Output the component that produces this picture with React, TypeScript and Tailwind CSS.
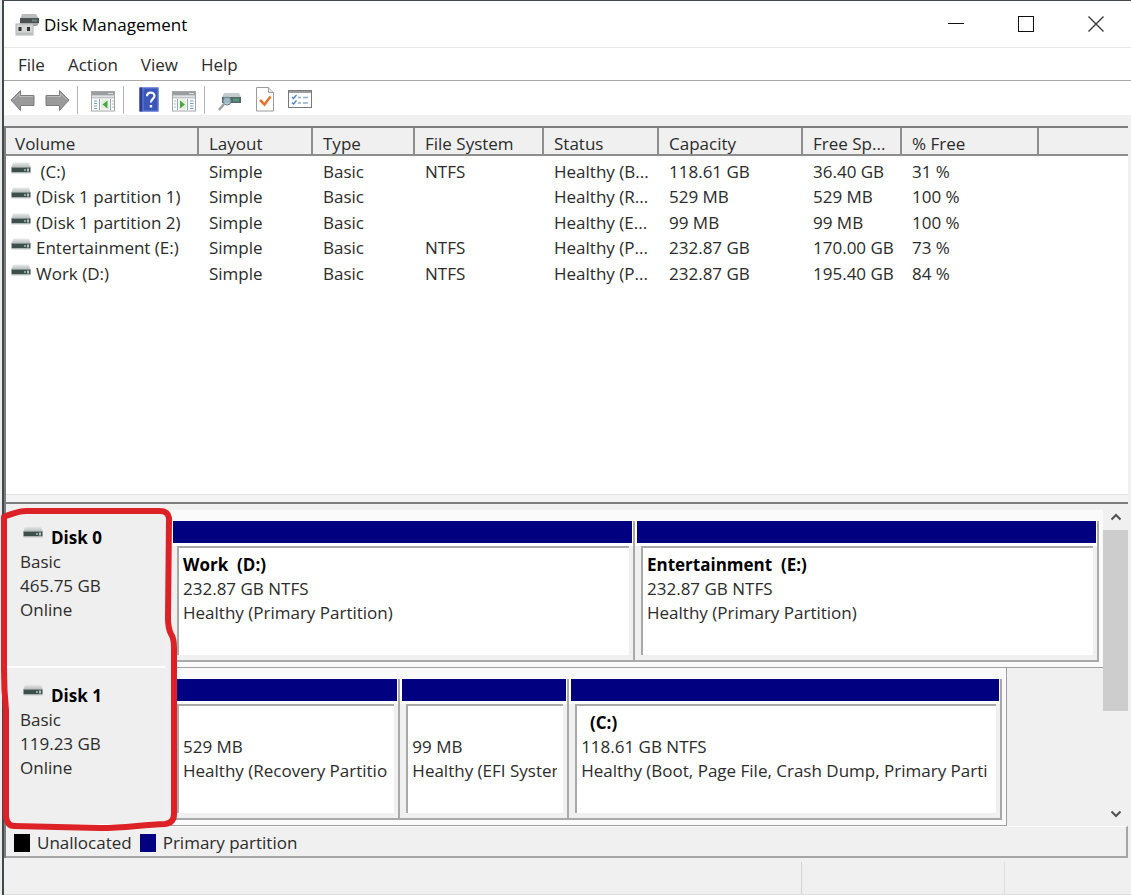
import type { ReactNode } from "react";

const columns = [
  { label: "Volume", width: "w-[193px]" },
  { label: "Layout", width: "w-[114px]" },
  { label: "Type", width: "w-[102px]" },
  { label: "File System", width: "w-[129px]" },
  { label: "Status", width: "w-[115px]" },
  { label: "Capacity", width: "w-[144px]" },
  { label: "Free Sp...", width: "w-[99px]" },
  { label: "% Free", width: "w-[137px]" },
];

const volumes = [
  [" (C:)", "Simple", "Basic", "NTFS", "Healthy (B...", "118.61 GB", "36.40 GB", "31 %"],
  ["(Disk 1 partition 1)", "Simple", "Basic", "", "Healthy (R...", "529 MB", "529 MB", "100 %"],
  ["(Disk 1 partition 2)", "Simple", "Basic", "", "Healthy (E...", "99 MB", "99 MB", "100 %"],
  ["Entertainment (E:)", "Simple", "Basic", "NTFS", "Healthy (P...", "232.87 GB", "170.00 GB", "73 %"],
  ["Work (D:)", "Simple", "Basic", "NTFS", "Healthy (P...", "232.87 GB", "195.40 GB", "84 %"],
];

const disks = [
  {
    name: "Disk 0",
    size: "465.75 GB",
    frame: "mr-0 pr-1",
    partitions: [
      { name: "Work  (D:)", size: "232.87 GB NTFS", status: "Healthy (Primary Partition)", grow: "flex-1" },
      { name: "Entertainment  (E:)", size: "232.87 GB NTFS", status: "Healthy (Primary Partition)", grow: "flex-1" },
    ],
  },
  {
    name: "Disk 1",
    size: "119.23 GB",
    frame: "mr-24 pr-1 border-r border-r-[#a0a0a0]",
    partitions: [
      { name: "", size: "529 MB", status: "Healthy (Recovery Partitio", grow: "flex-[229]" },
      { name: "", size: "99 MB", status: "Healthy (EFI System", grow: "flex-[168]" },
      { name: "  (C:)", size: "118.61 GB NTFS", status: "Healthy (Boot, Page File, Crash Dump, Primary Parti", grow: "flex-[434]" },
    ],
  },
];

function DriveIcon() {
  return (
    <svg width="20" height="13" viewBox="0 0 20 13" className="shrink-0" aria-hidden="true">
      <defs>
        <linearGradient id="driveTop" x1="0" y1="0" x2="0" y2="1">
          <stop offset="0" stopColor="#e9eceb" />
          <stop offset="1" stopColor="#b4bbb9" />
        </linearGradient>
      </defs>
      <path d="M2 0.5h16l1.500 5H0.500z" fill="url(#driveTop)" />
      <rect x="0.5" y="5.5" width="19" height="5" fill="#3c4f4a" />
      <rect x="0.5" y="5" width="19" height="1" fill="#84918d" />
      <rect x="13" y="7" width="2" height="2" fill="#8fa39c" />
      <rect x="16" y="6.5" width="2" height="3" fill="#b5c4bf" />
      <rect x="0.5" y="10.5" width="19" height="1" fill="#c4c9c8" />
    </svg>
  );
}

function AppIcon() {
  return (
    <svg width="25" height="23" viewBox="0 0 25 23" className="shrink-0" aria-hidden="true">
      <path d="M7 1h14l3 5H5z" fill="#b9bebc" />
      <rect x="5" y="5" width="19" height="5" fill="#4b5251" />
      <rect x="17" y="6.500" width="5" height="2" fill="#6f8a80" />
      <path d="M5 10h19l-2 3H5z" fill="#a2a7a6" />
      <rect x="1" y="11" width="17" height="11" fill="#d3d4d4" stroke="#b2b4b4" />
      <rect x="3.500" y="14" width="3" height="4" fill="#2f3232" />
      <rect x="12" y="14" width="3" height="4" fill="#2f3232" />
      <rect x="2" y="19.500" width="15" height="2" fill="#bdbfbf" />
    </svg>
  );
}

function ToolButton({ label, children }: { label: string; children: ReactNode }) {
  return (
    <button type="button" aria-label={label} className="flex h-[30px] w-[34px] items-center justify-center">
      <svg width="26" height="30" viewBox="0 0 26 30" aria-hidden="true">
        {children}
      </svg>
    </button>
  );
}

function ToolSeparator() {
  return <div className="ml-px mr-2 h-7 w-px bg-[#b4b4b4]" />;
}

const backArrow = "M1 15 L10.5 5.500 V10.500 H24 V20.500 H10.5 V25.500 Z";

function PaneWindow({ arrow }: { arrow: "left" | "right" }) {
  return (
    <>
      <rect x="0.5" y="6.5" width="23" height="19.500" fill="#fdfdfd" stroke="#a3a5a6" />
      <rect x="1" y="7" width="22" height="3.5" fill="#9b9ea0" />
      <rect x="17" y="8" width="5" height="1" fill="#d8dadb" />
      <rect x="1" y="11.5" width="22" height="2" fill="#c3c6c8" />
      {arrow === "left" ? (
        <>
          <path d="M3 16h3M3 18.5h3M3 21h3M3 23.5h3" stroke="#6fa0cc" strokeWidth="1.2" />
          <path d="M8.5 14v11M19.5 14v11" stroke="#8aa9c5" />
          <rect x="10" y="14.500" width="8" height="10" fill="#e3f1dd" />
          <path d="M16.500 15.500v8l-5-4z" fill="#4fa545" />
          <path d="M21 16h2M21 19h2M21 22h2" stroke="#a9b5bf" />
        </>
      ) : (
        <>
          <path d="M2 16h2M2 19h2M2 22h2" stroke="#a9b5bf" />
          <path d="M5.5 14v11M15.5 14v11" stroke="#8aa9c5" />
          <rect x="7" y="14.500" width="7" height="10" fill="#e3f1dd" />
          <path d="M8 15.5v8l5-4z" fill="#4fa545" />
          <path d="M18 16h3.500M18 18.5h3.500M18 21h3.500M18 23.500h3.500" stroke="#6fa0cc" strokeWidth="1.2" />
        </>
      )}
    </>
  );
}

function Toolbar() {
  return (
    <div className="flex h-[34px] items-center gap-px bg-white pl-0.5 pt-1">
      <ToolButton label="Back">
        <path d={backArrow} fill="#9a9a9a" stroke="#7b7b7b" strokeLinejoin="round" />
        <path d="M3 15 L9.500 8.500 V11.500 H23" fill="none" stroke="#bcbcbc" />
      </ToolButton>
      <ToolButton label="Forward">
        <g transform="matrix(-1 0 0 1 25 0)">
          <path d={backArrow} fill="#9a9a9a" stroke="#7b7b7b" strokeLinejoin="round" />
          <path d="M3 15 L9.500 8.500 V11.500 H23" fill="none" stroke="#bcbcbc" />
        </g>
      </ToolButton>
      <ToolSeparator />
      <ToolButton label="Show console tree">
        <PaneWindow arrow="left" />
      </ToolButton>
      <ToolSeparator />
      <ToolButton label="Help">
        <rect x="2.500" y="2.500" width="19" height="24" fill="#3b55b8" />
        <rect x="2.500" y="2.500" width="3" height="24" fill="#2a3c93" />
        <rect x="6" y="3" width="15" height="23" fill="none" stroke="#6b82d6" />
        <path d="M10 11.200c0-5 7.500-4.600 7.500-.4 0 3-3.600 3.200-3.600 6.600" fill="none" stroke="#f4f6ff" strokeWidth="2.200" />
        <rect x="12.700" y="20" width="2.500" height="2.500" fill="#f4f6ff" />
      </ToolButton>
      <ToolButton label="Show action pane">
        <PaneWindow arrow="right" />
      </ToolButton>
      <ToolSeparator />
      <ToolButton label="Rescan disks">
        <path d="M6 8h15l2 4H4z" fill="#c5cbcb" />
        <rect x="4" y="12" width="19" height="6" fill="#53676a" />
        <rect x="15" y="13.500" width="6" height="3" fill="#4f9a78" />
        <circle cx="9" cy="16" r="4" fill="#a9c4d4" fillOpacity="0.850" stroke="#71838e" />
        <path d="M6 19l-5 6" stroke="#9b9fa3" strokeWidth="2.500" />
      </ToolButton>
      <ToolButton label="Properties">
        <path d="M3.500 2.500h12l5 5v18.500h-17z" fill="#fdfdfd" stroke="#9c9c9c" />
        <path d="M15.500 2.500v5h5" fill="#e4e4e4" stroke="#9c9c9c" />
        <path d="M7 15l4.500 4.500 6-8" fill="none" stroke="#e2762e" strokeWidth="2.600" />
      </ToolButton>
      <ToolButton label="Settings">
        <rect x="0.500" y="5.500" width="23" height="17" fill="#fdfdfd" stroke="#77797b" />
        <path d="M1 7h22" stroke="#9b9ea0" strokeWidth="2" />
        <path d="M4 12l1.500 1.500 3-3.500M4 17.500l1.500 1.500 3-3.500" fill="none" stroke="#3f86c6" strokeWidth="1.300" />
        <path d="M10 12.500h3M15 12.500h5M10 18h3M15 18h5" stroke="#8fb2d0" strokeWidth="1.500" />
      </ToolButton>
    </div>
  );
}

function VolumeTable() {
  return (
    <table className="w-full table-fixed border-separate border-spacing-0 text-left">
      <colgroup>
        {columns.map((c) => (
          <col key={c.label} className={c.width} />
        ))}
        <col />
      </colgroup>
      <thead>
        <tr className="h-7 bg-[#f0f0f0]">
          {columns.map((c) => (
            <th
              key={c.label}
              className="border-b-2 border-r-2 border-[#8e8e8e] p-0 pl-2.5 pt-1.5 font-normal leading-5 first:pl-[9px]"
            >
              {c.label}
            </th>
          ))}
          <td className="border-b-2 border-[#8e8e8e] p-0" />
        </tr>
      </thead>
      <tbody>
        {volumes.map(([name, ...cells]) => (
          <tr key={name} className="odd:h-[26px] even:h-[25px]">
            <td className="p-0 pl-[5px] pt-[5px]">
              <div className="flex items-start gap-[5px] whitespace-pre leading-5">
                <DriveIcon />
                {name}
              </div>
            </td>
            {cells.map((cell, i) => (
              <td key={i} className="whitespace-nowrap p-0 pl-2.5 pt-[5px] leading-5">
                {cell}
              </td>
            ))}
          </tr>
        ))}
      </tbody>
    </table>
  );
}

type Partition = (typeof disks)[number]["partitions"][number];

function PartitionBox({ name, size, status, grow }: Partition) {
  return (
    <div className={`flex min-w-0 flex-col border-b-2 border-r-2 border-[#a9a9a9] bg-[#f0f0f0] ${grow}`}>
      <div className="bg-white pb-[3px] pl-0.5 pr-px">
        <div className="h-[22px] bg-[#000080]" />
      </div>
      <div className="mb-[5px] ml-1.5 mr-1 flex-1 border-l-2 border-t-2 border-[#a9a9a9] bg-white pl-1 pt-[5px] leading-6">
        <div className="mr-1.5 overflow-hidden whitespace-pre">
          <p className="h-6 font-bold text-black">{name}</p>
          <p>{size}</p>
          <p>{status}</p>
        </div>
      </div>
    </div>
  );
}

function DiskRow({ name, size, frame, partitions }: (typeof disks)[number]) {
  return (
    <section className="flex h-[158px]">
      <div className="mr-1.5 w-[159px] border-b-2 border-white bg-[#efefef] pl-3.5 pt-4 leading-6">
        <div className="flex gap-2 pl-[3px]">
          <DriveIcon />
          <h2 className="font-bold text-black">{name}</h2>
        </div>
        <p>Basic</p>
        <p>{size}</p>
        <p>Online</p>
      </div>
      <div className={`flex min-w-0 flex-1 border-b border-b-[#a0a0a0] bg-[#fafafa] pb-[5px] pt-[11px] ${frame}`}>
        {partitions.map((p) => (
          <PartitionBox key={p.name + p.status} {...p} />
        ))}
      </div>
    </section>
  );
}

function ScrollBar() {
  return (
    <div className="flex w-[25px] flex-col bg-[#f0f0f0]">
      <button type="button" aria-label="Scroll up" className="flex h-[26px] items-center justify-center">
        <svg width="12" height="8" viewBox="0 0 12 8" fill="none" stroke="#505050" strokeWidth="2">
          <path d="M1.500 6.500L6 2l4.500 4.500" />
        </svg>
      </button>
      <div className="flex-1">
        <div className="h-2/3 bg-[#cdcdcd]" />
      </div>
      <button type="button" aria-label="Scroll down" className="flex h-6 items-center justify-center">
        <svg width="12" height="8" viewBox="0 0 12 8" fill="none" stroke="#505050" strokeWidth="2">
          <path d="M1.500 1.500L6 6l4.500-4.500" />
        </svg>
      </button>
    </div>
  );
}

// Hand-drawn red outline around the disk labels
function RedMarker() {
  return (
    <svg width="190" height="336" viewBox="0 0 190 336" className="pointer-events-none absolute -left-1.5 -top-1" fill="none" aria-hidden="true">
      <path
        d="M6 16 C12 14 18 11 26 11 L160 11 Q168 11 169 18 L168 118 Q168 128 171 134 Q174 138 174 148 L174 314 Q174 323 165 324 C140 325 125 328 100 328 L14 326 Q7 326 6 316 L6 210 Q4 190 4 170 L4 17"
        stroke="#dc2127"
        strokeWidth="6"
        strokeLinecap="round"
        strokeLinejoin="round"
      />
    </svg>
  );
}

export default function App() {
  return (
    <div className="min-h-screen bg-[#ececec] pl-0.5 font-['Open_Sans','Noto_Sans',sans-serif] text-[17px] text-[#2b2b2b]">
      <div className="flex min-h-screen flex-col border-l-2 border-t border-[#3f4a4c] bg-[#f0f0f0]">
        <header className="flex h-[46px] items-center bg-white pl-[11px] text-black">
          <AppIcon />
          <h1 className="ml-1 flex-1 pt-0.5">Disk Management</h1>
          <button type="button" aria-label="Minimize" className="flex h-full w-[70px] items-center justify-center">
            <svg width="16" height="16" viewBox="0 0 16 16" stroke="#111">
              <path d="M0 7.500h16" />
            </svg>
          </button>
          <button type="button" aria-label="Maximize" className="flex h-full w-[70px] items-center justify-center">
            <svg width="16" height="16" viewBox="0 0 16 16" stroke="#111" fill="none">
              <rect x="0.500" y="0.500" width="15" height="15" />
            </svg>
          </button>
          <button type="button" aria-label="Close" className="flex h-full w-[70px] items-center justify-center">
            <svg width="16" height="16" viewBox="0 0 16 16" stroke="#333" strokeWidth="1.300">
              <path d="M0.500 0.500l15 15M15.500 0.500l-15 15" />
            </svg>
          </button>
        </header>

        <nav className="flex h-[34px] items-center gap-[23px] border-b border-t border-b-[#a8a8a8] border-t-[#e6e6e6] bg-white pl-3.5 pt-0.5">
          <button type="button">File</button>
          <button type="button">Action</button>
          <button type="button">View</button>
          <button type="button">Help</button>
        </nav>

        <Toolbar />

        <main className="mr-[3px] mt-[11px] flex flex-1 flex-col border-l-2 border-t-2 border-[#7d7d7d]">
          <div className="flex-1 bg-white">
            <VolumeTable />
          </div>
          <div className="h-2.5 border-b-2 border-b-[#7d7d7d] border-t border-t-[#e2e2e2] bg-[#f3f3f3]" />

          <div className="relative flex">
            <div className="min-w-0 flex-1 pt-1.5">
              {disks.map((d) => (
                <DiskRow key={d.name} {...d} />
              ))}
            </div>
            <ScrollBar />
            <RedMarker />
          </div>

          <div className="flex h-8 items-center border-b-2 border-r-2 border-t border-b-[#a5a5a5] border-r-[#a5a5a5] border-t-[#fafafa] pl-2 pt-0.5">
            <span className="mr-[7px] h-[18px] w-4 bg-black" />
            <span className="mr-2">Unallocated</span>
            <span className="mr-[7px] h-[18px] w-4 bg-[#000080]" />
            <span>Primary partition</span>
          </div>
        </main>

        <footer className="mt-1 flex h-[33px] border-b border-[#dcdcdc]">
          <div className="flex-1 border-r border-[#d2d2d2]" />
          <div className="w-[203px] border-r border-[#dedede]" />
          <div className="w-[126px]" />
        </footer>
      </div>
    </div>
  );
}
